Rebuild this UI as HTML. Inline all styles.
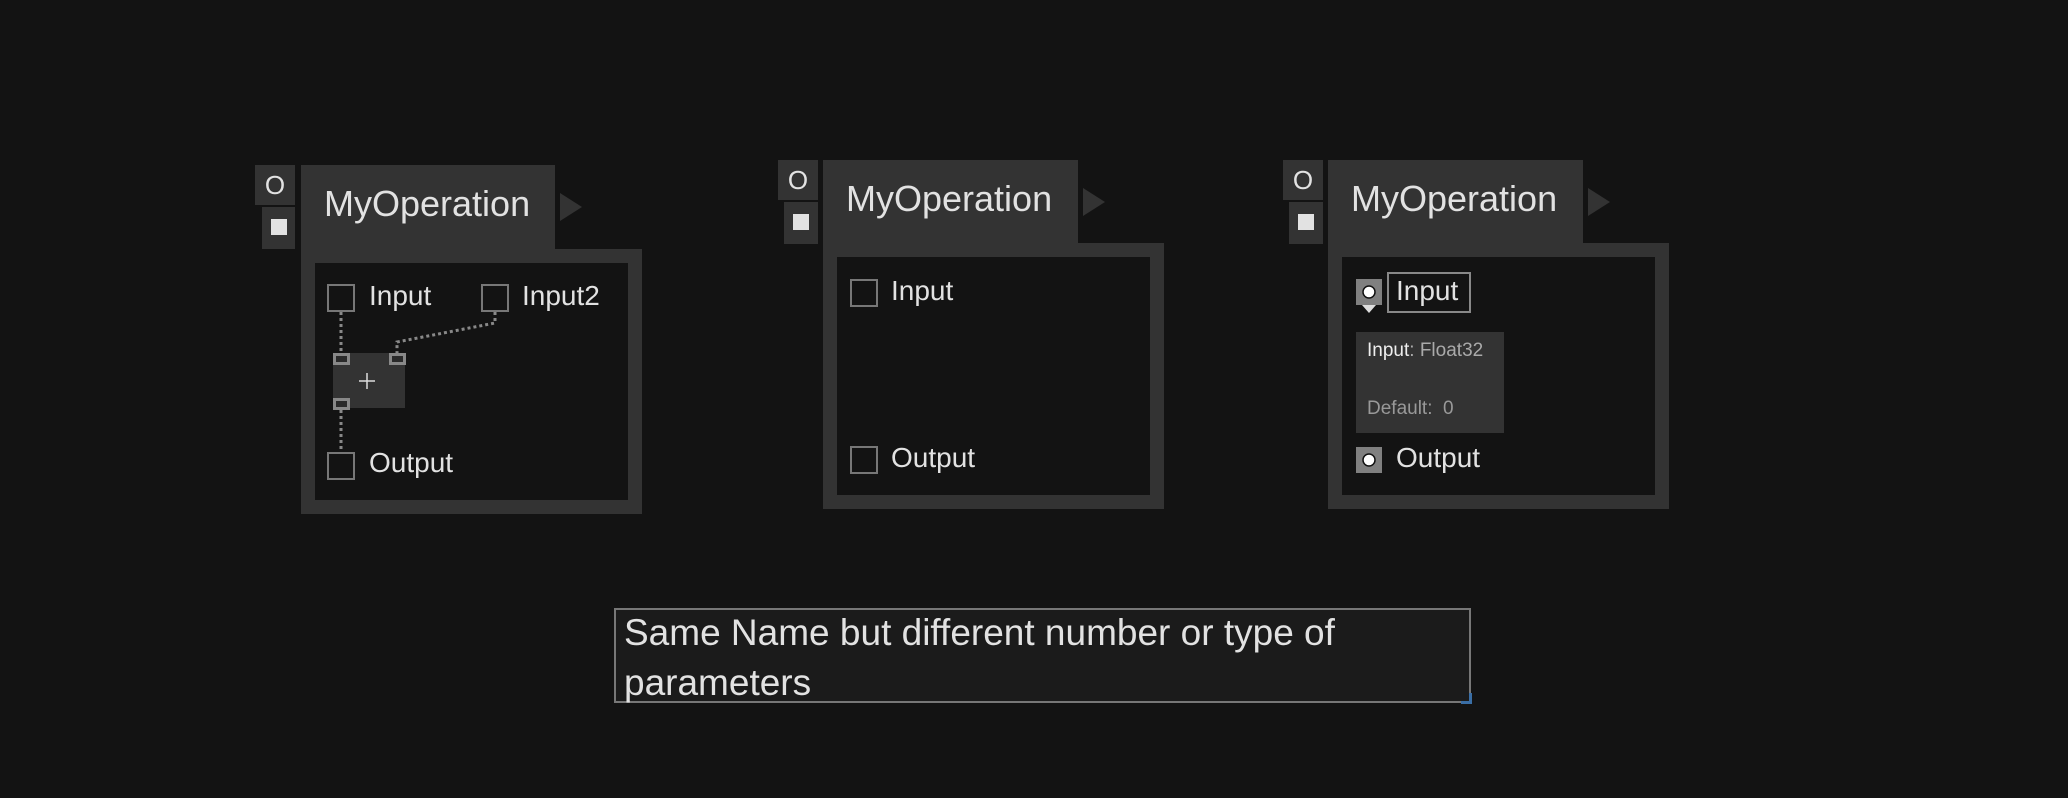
<!DOCTYPE html>
<html><head><meta charset="utf-8"><style>
*{margin:0;padding:0;box-sizing:border-box}
body{width:2068px;height:798px;background:#131313;position:relative;overflow:hidden;font-family:"Liberation Sans","DejaVu Sans",sans-serif;color:#e2e2e2}
.a{position:absolute}
.ob{background:#333;color:#e2e2e2;font-size:26px;text-align:center;line-height:40px}
.sq{background:#333}
.sq i{position:absolute;left:9px;top:12px;width:16px;height:16px;background:#e2e2e2}
.tab{background:#333}
.title{font-size:36px;line-height:36px;white-space:nowrap}
.body{background:#333}
.inner{background:#131313}
.cb{border:2px solid #777;width:28px;height:28px}
.lbl{font-size:28px;line-height:28px;white-space:nowrap}
.arr{width:0;height:0;border-top:14px solid transparent;border-bottom:14px solid transparent;border-left:22px solid #333}
</style></head><body>

<!-- Node 1 -->
<div class="a ob" style="left:255px;top:165px;width:40px;height:40px">O</div>
<div class="a sq" style="left:262px;top:207px;width:33px;height:42px"><i></i></div>
<div class="a tab" style="left:301px;top:165px;width:254px;height:86px"></div>
<div class="a title" style="left:324px;top:186px">MyOperation</div>
<div class="a arr" style="left:560px;top:193px"></div>
<div class="a body" style="left:301px;top:249px;width:341px;height:265px"></div>
<div class="a inner" style="left:315px;top:263px;width:313px;height:237px"></div>
<div class="a cb" style="left:327px;top:284px"></div>
<div class="a lbl" style="left:369px;top:282px">Input</div>
<div class="a cb" style="left:481px;top:284px"></div>
<div class="a lbl" style="left:522px;top:282px">Input2</div>
<div class="a" style="left:333px;top:353px;width:72px;height:55px;background:#333"></div>
<svg class="a" style="left:0;top:0" width="2068" height="798">
<g stroke="#888" stroke-width="3" stroke-dasharray="3 3" fill="none">
<path d="M341 312V353"/><path d="M495 312V323L397 342V353"/><path d="M341 410V452"/>
</g>
<g fill="#2a2a2a" stroke="#888" stroke-width="3">
<rect x="334.5" y="354.5" width="14" height="9"/><rect x="390.5" y="354.5" width="14" height="9"/><rect x="334.5" y="399.5" width="14" height="9"/>
</g>
<path d="M359 381H375M367 373V389" stroke="#ddd" stroke-width="1.5"/>
</svg>
<div class="a cb" style="left:327px;top:452px"></div>
<div class="a lbl" style="left:369px;top:449px">Output</div>

<!-- Node 2 -->
<div class="a ob" style="left:778px;top:160px;width:40px;height:40px">O</div>
<div class="a sq" style="left:784px;top:202px;width:34px;height:42px"><i></i></div>
<div class="a tab" style="left:823px;top:160px;width:255px;height:86px"></div>
<div class="a title" style="left:846px;top:181px">MyOperation</div>
<div class="a arr" style="left:1083px;top:188px"></div>
<div class="a body" style="left:823px;top:243px;width:341px;height:266px"></div>
<div class="a inner" style="left:837px;top:257px;width:313px;height:238px"></div>
<div class="a cb" style="left:850px;top:279px"></div>
<div class="a lbl" style="left:891px;top:277px">Input</div>
<div class="a cb" style="left:850px;top:446px"></div>
<div class="a lbl" style="left:891px;top:444px">Output</div>

<!-- Node 3 -->
<div class="a ob" style="left:1283px;top:160px;width:40px;height:40px">O</div>
<div class="a sq" style="left:1289px;top:202px;width:34px;height:42px"><i></i></div>
<div class="a tab" style="left:1328px;top:160px;width:255px;height:86px"></div>
<div class="a title" style="left:1351px;top:181px">MyOperation</div>
<div class="a arr" style="left:1588px;top:188px"></div>
<div class="a body" style="left:1328px;top:243px;width:341px;height:266px"></div>
<div class="a inner" style="left:1342px;top:257px;width:313px;height:238px"></div>
<svg class="a" style="left:0;top:0" width="2068" height="798">
<rect x="1356" y="279" width="26" height="26" fill="#808080"/>
<path d="M1362 305H1376L1369 313Z" fill="#ddd"/>
<circle cx="1369" cy="292" r="6" fill="#fff" stroke="#111" stroke-width="1.5"/>
<rect x="1356" y="447" width="26" height="26" fill="#808080"/>
<circle cx="1369" cy="460" r="6" fill="#fff" stroke="#111" stroke-width="1.5"/>
</svg>
<div class="a" style="left:1387px;top:272px;width:84px;height:41px;border:2px solid #888"></div>
<div class="a lbl" style="left:1396px;top:277px">Input</div>
<div class="a" style="left:1356px;top:332px;width:148px;height:101px;background:#333"></div>
<div class="a" style="left:1367px;top:340px;font-size:19px;line-height:22px;white-space:nowrap"><span style="color:#eee">Input</span><span style="color:#aaa">: Float32</span></div>
<div class="a" style="left:1367px;top:398px;font-size:19px;line-height:22px;white-space:nowrap;color:#999">Default:&nbsp;&nbsp;0</div>
<div class="a lbl" style="left:1396px;top:444px">Output</div>

<!-- Text box -->
<div class="a" style="left:614px;top:608px;width:857px;height:95px;background:#1b1b1b;border:2px solid #777"></div>
<div class="a" style="left:624px;top:608px;font-size:37px;line-height:50px;color:#e2e2e2;width:845px;white-space:nowrap">Same Name but different number or type of<br>parameters</div>
<div class="a" style="left:1461px;top:693px;width:11px;height:11px;border-right:3px solid #3a6ea5;border-bottom:3px solid #3a6ea5"></div>
</body></html>
